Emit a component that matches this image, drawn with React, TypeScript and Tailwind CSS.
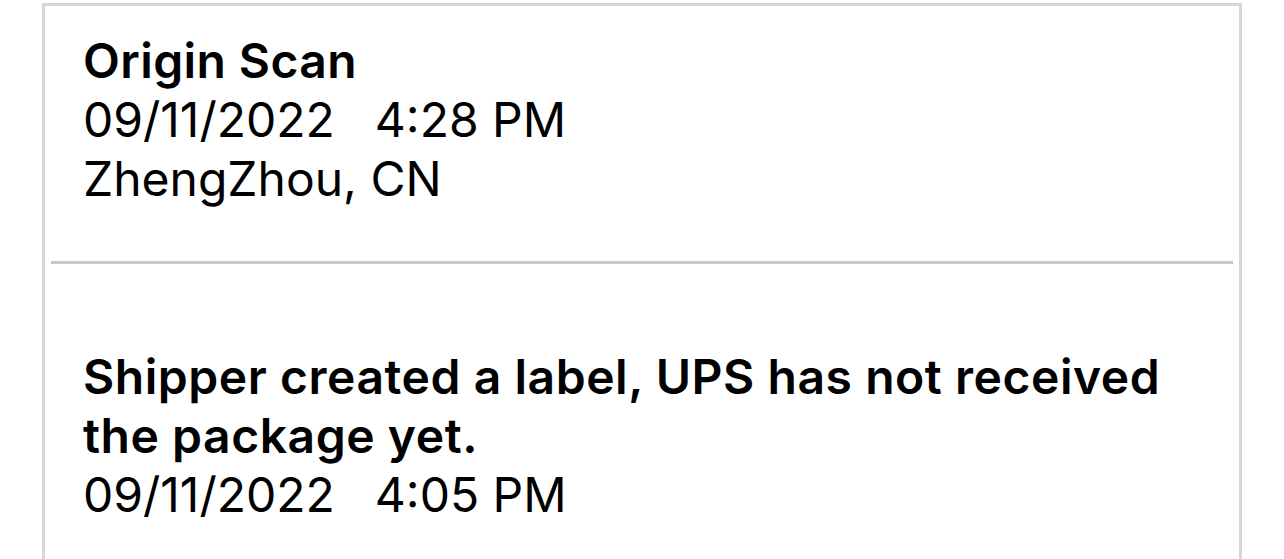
import React from "react";

export default function App() {
  return (
    <div className="min-h-[559px] w-[1284px] bg-white overflow-hidden" style={{ fontFamily: "Inter, 'Noto Sans', sans-serif" }}>
      <div className="ml-[42px] mt-[3px] w-[1200px] h-[556px] border-[3px] border-b-0 border-[#d6d6d6] text-black overflow-hidden">
        <div className="pl-[38px] pt-[25px] pb-[53px] text-[48px] leading-[59px]">
          <div className="font-semibold tracking-[0.4px]">Origin Scan</div>
          <div>
            <span>09/11/2022</span>
            <span className="ml-[40px]">4:28 PM</span>
          </div>
          <div>ZhengZhou, CN</div>
        </div>
        <div className="mx-[6px] h-[3px] bg-[#cdc8c3]" />
        <div className="pl-[38px] pt-[83px] text-[48px] leading-[59px]">
          <div className="font-semibold tracking-[0.55px]">
            Shipper created a label, UPS has not received
            <br />
            the package yet.
          </div>
          <div>
            <span>09/11/2022</span>
            <span className="ml-[40px]">4:05 PM</span>
          </div>
        </div>
      </div>
    </div>
  );
}
